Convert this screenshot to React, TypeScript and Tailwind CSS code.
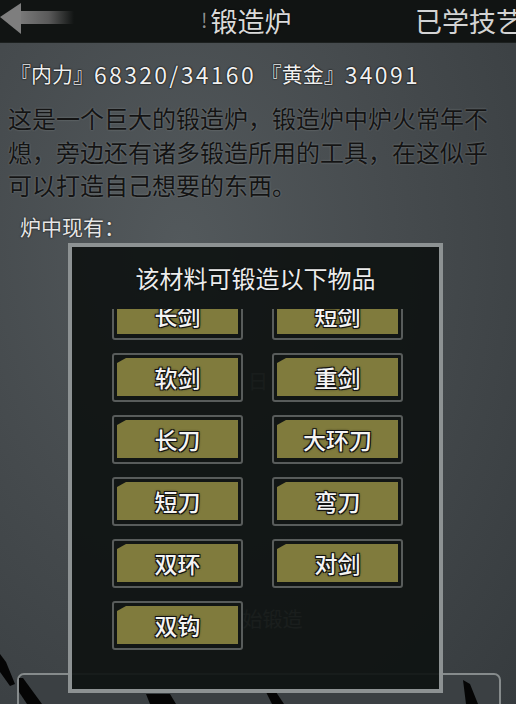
const weapons = ["长剑", "短剑", "软剑", "重剑", "长刀", "大环刀", "短刀", "弯刀", "双环", "对剑", "双钩"];

const font = "font-['Noto_Sans_CJK_SC','Noto_Sans',sans-serif]";

const BackArrow = () => (
  <svg width="76" height="36" viewBox="0 0 76 36">
    <defs>
      <linearGradient id="shaft" x1="0" x2="1" y1="0" y2="0">
        <stop offset="0" stopColor="#7c7c7c" />
        <stop offset="0.55" stopColor="#5a5a5a" />
        <stop offset="1" stopColor="#5a5a5a" stopOpacity="0" />
      </linearGradient>
    </defs>
    <rect x="18" y="10" width="56" height="13" fill="url(#shaft)" />
    <polygon points="0,16 21,2 21,33" fill="#7e7e7e" />
  </svg>
);

const Num = ({ children }: { children: string }) => (
  <span className="text-[23px] tracking-[2.3px]">{children}</span>
);

const WeaponButton = ({ name }: { name: string }) => (
  <div className="h-[49px] rounded-[3px] border-2 border-[#585c5b] bg-[#121615] px-[3px] pt-[3px] pb-[4px]">
    <div className="h-full bg-[#807b3d] [clip-path:polygon(9px_0,100%_0,100%_100%,0_100%,0_5px)] flex items-center justify-center text-[23px] font-medium text-[#f4f4f4] [text-shadow:1px_1px_0_#111,-1px_-1px_0_#111,1px_-1px_0_#111,-1px_1px_0_#111,0_0_3px_#000]">
      {name}
    </div>
  </div>
);

const ForgeModal = () => (
  <div className="absolute left-[68px] top-[243px] w-[375px] h-[450px] border-4 border-[#8d9293] bg-[rgba(14,18,17,0.92)] flex flex-col">
    <div className="h-[62px] shrink-0 flex items-center justify-center text-[24px] text-[#ececec] [text-shadow:0_0_2px_#000]">
      该材料可锻造以下物品
    </div>
    <div className="flex-1 overflow-hidden">
      <div className="-mt-[18px] ml-[40px] grid grid-cols-[131px_131px] gap-x-[29px] gap-y-[13px]">
        {weapons.map((w) => (
          <WeaponButton key={w} name={w} />
        ))}
      </div>
    </div>
  </div>
);

export default function App() {
  return (
    <div
      className={`${font} relative w-[516px] h-[704px] overflow-hidden bg-[radial-gradient(ellipse_at_35%_35%,#53595c_0%,#464b4e_45%,#363b3e_100%)]`}
    >
      {/* top bar */}
      <div className="h-[43px] bg-[#111413] border-b border-[#1c201f] flex items-center relative">
        <div className="absolute left-0 top-[1px]">
          <BackArrow />
        </div>
        <div className="absolute left-[201px] top-0 h-[40px] flex items-center text-[#dadada] [text-shadow:0_0_2px_#000]">
          <span className="text-[20px] text-[#8e8e8e] mr-[3px]">!</span>
          <span className="text-[27px] leading-none">锻造炉</span>
        </div>
        <div className="absolute left-[415px] top-0 h-[40px] flex items-center text-[27px] leading-none text-[#d4d4d4] whitespace-nowrap">
          已学技艺
        </div>
      </div>

      {/* page body */}
      <div className="flex flex-col">
        <div className="mt-[16px] ml-[10px] h-[30px] flex items-center text-[21px] text-[#f0f0f0] whitespace-nowrap [text-shadow:0_0_2px_#000,0_0_1px_#000]">
          『内力』<Num>68320/34160</Num>&nbsp;『黄金』<Num>34091</Num>
        </div>
        <p className="mt-[12px] ml-[8px] w-[484px] text-[24px] leading-[33.5px] text-[#141414] [text-shadow:0_0_2px_rgba(140,146,148,0.8)]">
          这是一个巨大的锻造炉，锻造炉中炉火常年不熄，旁边还有诸多锻造所用的工具，在这似乎可以打造自己想要的东西。
        </p>
        <div className="mt-[10px] ml-[20px] h-[30px] flex items-center text-[21px] text-[#e6e6e6] [text-shadow:0_0_2px_#000]">
          炉中现有：
        </div>

        {/* forge slots under the popup */}
        <div className="mt-[125px] h-[28px] flex items-center justify-center text-[20px] text-[#9a9a9a]">
          日
        </div>
        <div className="mt-[200px] ml-[190px] w-[145px] h-[48px] border border-[#3e4344] flex items-center justify-center text-[20px] text-[#a4a4a4]">
          开始锻造
        </div>
        <div className="mt-[30px] ml-[17px] w-[484px] h-[60px] rounded-t-[7px] border-2 border-[#868b8c] bg-[#3b4043]" />
      </div>

      {/* blade silhouettes along the bottom edge */}
      <svg className="absolute left-0 top-[640px]" width="60" height="64" viewBox="0 0 60 64">
        <polygon points="0,14 6,22 15,44 10,46 0,32" fill="#050505" />
        <polygon points="19,38 23,38 42,64 27,64 19,52" fill="#050505" />
      </svg>
      <svg className="absolute left-[140px] top-[690px]" width="150" height="14" viewBox="0 0 150 14">
        <polygon points="6,4 30,4 36,14 10,14" fill="#050505" />
        <polygon points="126,2 136,2 144,14 132,14" fill="#050505" />
      </svg>
      <svg className="absolute left-[460px] top-[678px]" width="24" height="26" viewBox="0 0 24 26">
        <polygon points="3,2 10,6 18,26 6,26" fill="#050505" />
      </svg>

      <ForgeModal />
    </div>
  );
}
